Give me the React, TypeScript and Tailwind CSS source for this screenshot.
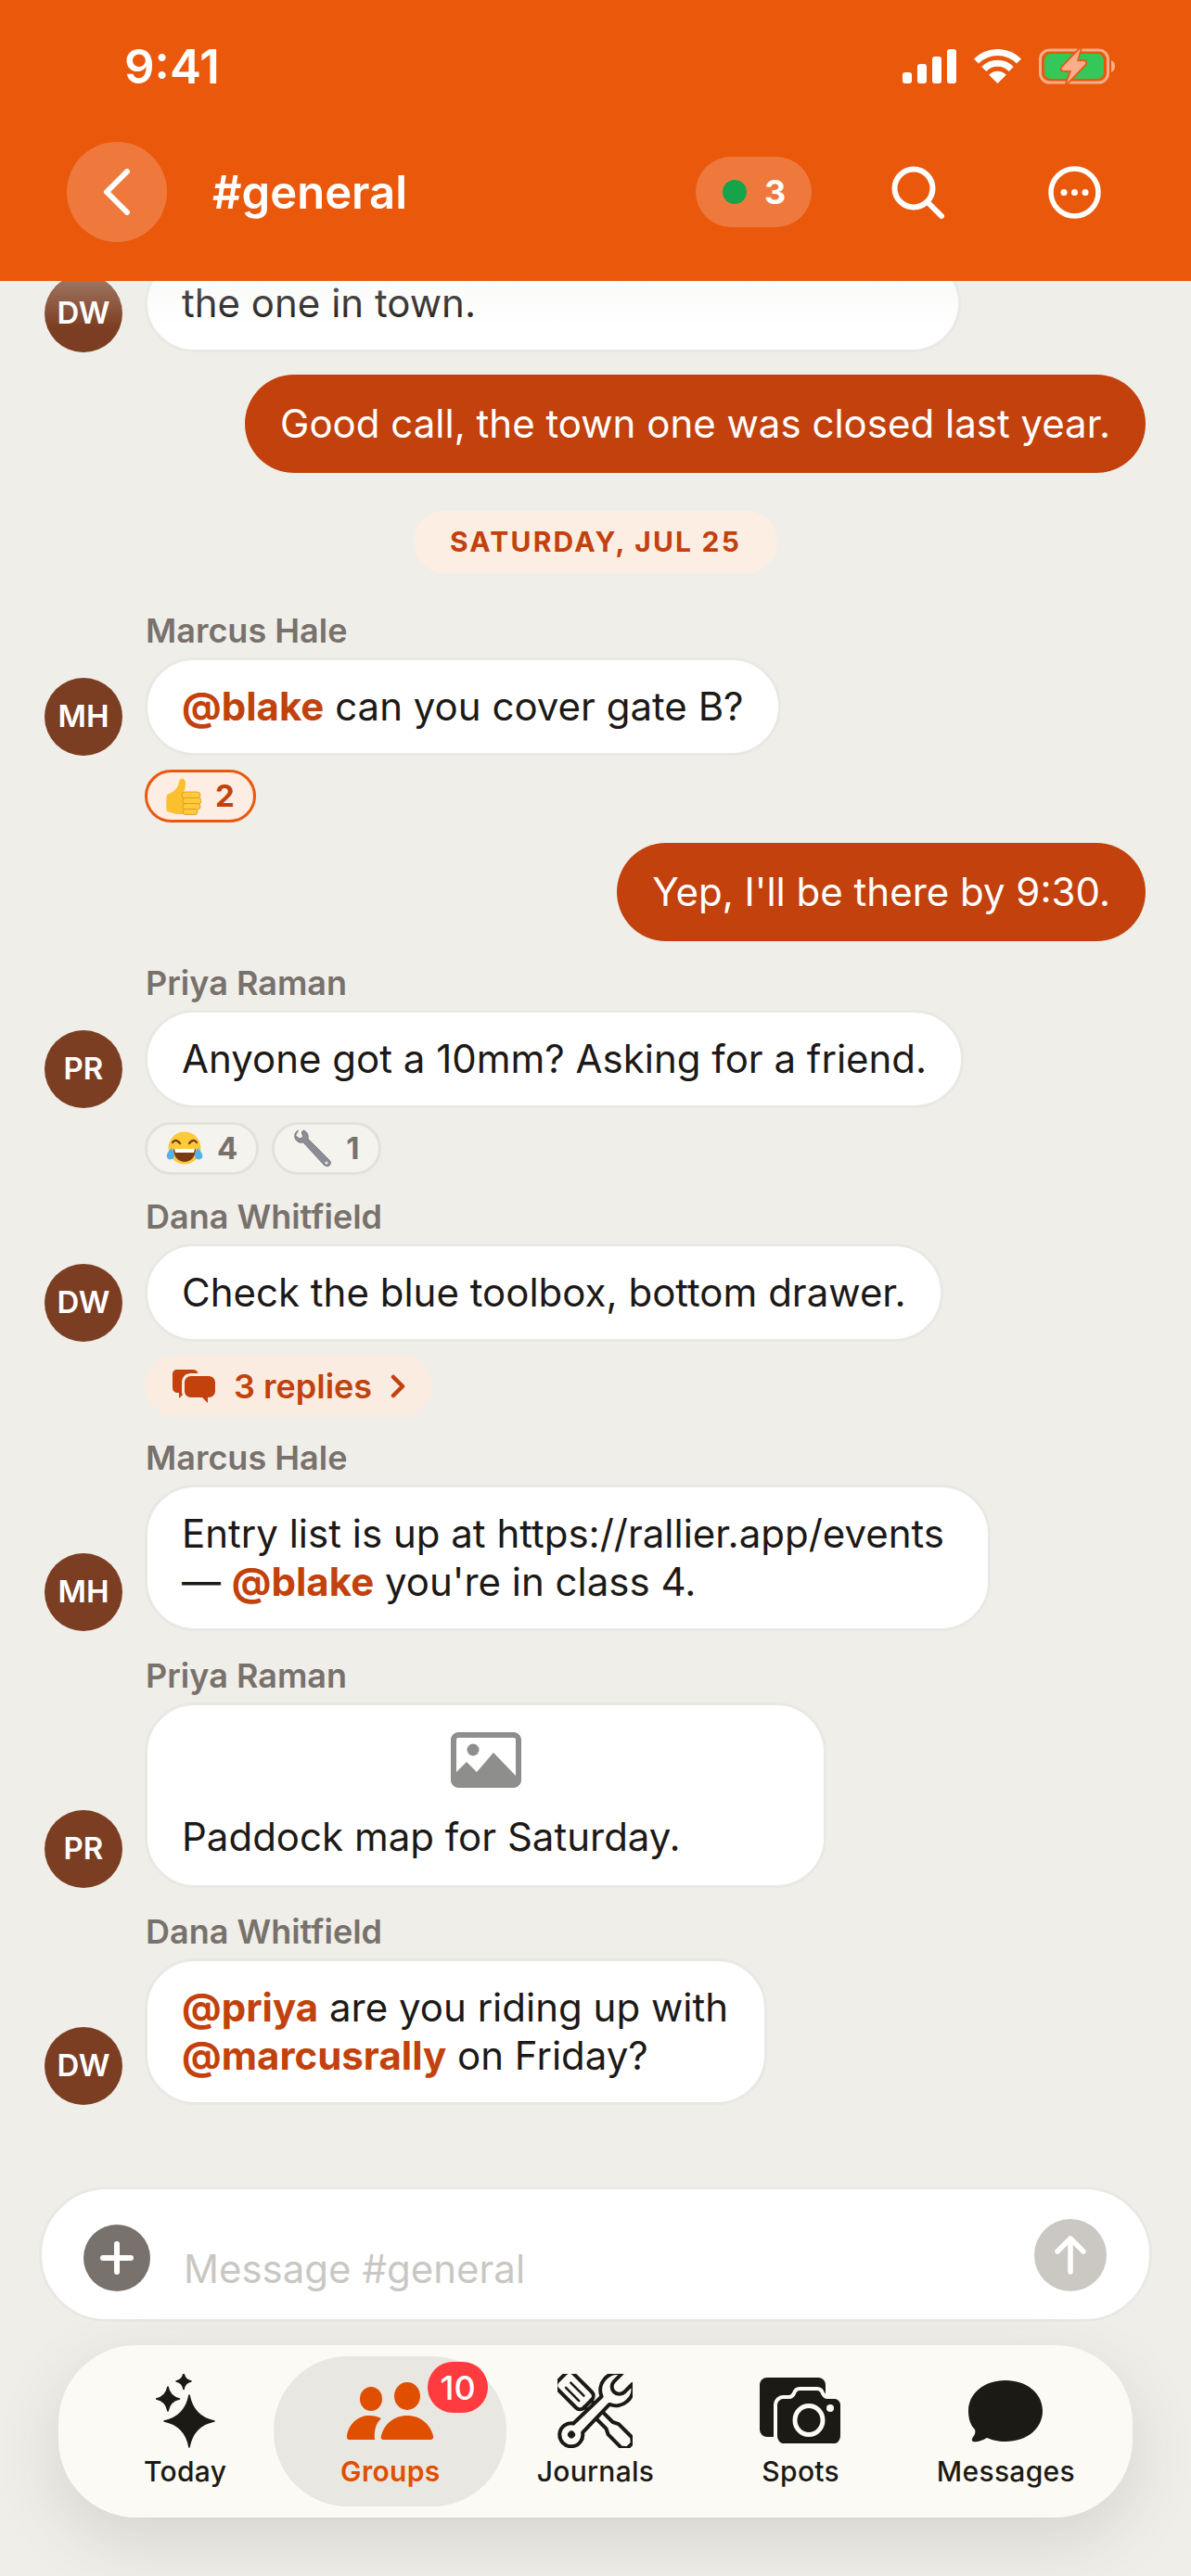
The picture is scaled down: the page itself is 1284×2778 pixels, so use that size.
import type { ReactNode } from 'react';

const Star = ({ cx, cy, rx, ry, w }: { cx: number; cy: number; rx: number; ry: number; w: number }) => (
  <path
    d={`M${cx} ${cy - ry}C${cx + w * 0.5} ${cy - w * 2} ${cx + w * 2} ${cy - w * 0.5} ${cx + rx} ${cy}C${cx + w * 2} ${cy + w * 0.5} ${cx + w * 0.5} ${cy + w * 2} ${cx} ${cy + ry}C${cx - w * 0.5} ${cy + w * 2} ${cx - w * 2} ${cy + w * 0.5} ${cx - rx} ${cy}C${cx - w * 2} ${cy - w * 0.5} ${cx - w * 0.5} ${cy - w * 2} ${cx} ${cy - ry}Z`}
    fill="#1C1A15"
    stroke="#1C1A15"
    strokeWidth="1.5"
    strokeLinejoin="round"
  />
);

const TodayIcon = () => (
  <svg width="64" height="80" viewBox="0 0 64 80">
    <Star cx={36} cy={51} rx={27} ry={28} w={6} />
    <Star cx={13} cy={27} rx={12.5} ry={13} w={2.8} />
    <Star cx={30} cy={8} rx={8} ry={8.5} w={1.8} />
  </svg>
);

const GroupsIcon = () => (
  <svg width="94" height="62" viewBox="0 0 94 62" fill="#E04F00">
    <ellipse cx="26" cy="18" rx="12" ry="13" />
    <ellipse cx="65" cy="15" rx="14" ry="15" />
    <path d="M3 62C0 62 0 60 0 58C2 44 13 36 24 36C29 36 33 37 37 39C32 44 29 50 30 62Z" />
    <path d="M40 62C37 62 36 60 37 58C40 45 51 36 65 36C79 36 90 45 93 58C94 60 92 62 90 62Z" />
  </svg>
);

const JournalsIcon = () => (
  <svg width="81" height="80" viewBox="0 0 80 80" fill="none" stroke="#1C1A15" strokeWidth="4" strokeLinejoin="round" strokeLinecap="round">
    <g transform="translate(40 40) rotate(-45)">
      <rect x="-12" y="-51" width="24" height="40" rx="6" />
      <path d="M-4.500 -40V-20M3 -40V-20" strokeWidth="2.500" />
      <path d="M-5 -11V22L-8 28V48L-4 53H4L8 48V28L5 22V-11" />
    </g>
    <g transform="translate(40 40) rotate(45)">
      <path
        d="M-8 -49A18.500 18.500 0 0 0 -6 -16L-7 26A12.500 12.500 0 1 0 7 26L6 -16A18.500 18.500 0 0 0 8 -49L8 -37A8 8 0 0 1 -8 -37Z"
        fill="#FCFAF5"
      />
      <circle cx="0" cy="36" r="4" fill="#1C1A15" stroke="none" />
    </g>
  </svg>
);

const SpotsIcon = () => (
  <svg width="89" height="73" viewBox="0 0 89 73">
    <rect x="0" y="0" width="71" height="64" rx="8" fill="#1C1A15" />
    <path
      d="M25 21H32C34 21 36 19 37 17C38 14 40 12 43 12H62C65 12 67 14 68 17C69 19 71 21 73 21H81C85 21 89 25 89 29V63C89 68 85 73 81 73H25C21 73 17 68 17 63V29C17 25 21 21 25 21Z"
      fill="#1C1A15"
      stroke="#FCFAF5"
      strokeWidth="4"
    />
    <ellipse cx="53" cy="46" rx="15" ry="15.500" fill="none" stroke="#FCFAF5" strokeWidth="5" />
    <circle cx="76" cy="33" r="4" fill="#FCFAF5" />
  </svg>
);

const MessagesIcon = () => (
  <svg width="80" height="67" viewBox="0 0 80 67">
    <path
      d="M40 0C63 0 80 14 80 33C80 52 63 66 40 66C31 66 25 64 20 62C15 65 9 67 5 66C3 65 4 63 5 61C7 59 8 56 7 53C2 48 0 41 0 33C0 14 17 0 40 0Z"
      fill="#1C1A15"
    />
  </svg>
);

const ThumbsUp = () => (
  <svg width="38" height="40" viewBox="0 0 38 40">
    <path
      d="M16 1C19 0 21 2 21 6C21 10 20 13 19 15H22V39H11C7 38 5 37 1 36C0 32 0 23 1 18C6 16 11 13 13 8C14 5 14 2 16 1Z"
      fill="#FBC02D"
    />
    <rect x="17" y="15" width="20" height="7" rx="3.500" fill="#FFCB3D" stroke="#D9921A" strokeWidth="0.8" />
    <rect x="18" y="21.500" width="20" height="6.500" rx="3.200" fill="#FFCB3D" stroke="#D9921A" strokeWidth="0.8" />
    <rect x="18" y="27.500" width="19" height="6.500" rx="3.200" fill="#FFCB3D" stroke="#D9921A" strokeWidth="0.8" />
    <rect x="18" y="33.500" width="16" height="6" rx="3" fill="#FFCB3D" stroke="#D9921A" strokeWidth="0.8" />
  </svg>
);

const Laugh = () => (
  <svg width="40" height="38" viewBox="0 0 40 38">
    <circle cx="20" cy="18" r="17.500" fill="#FFC93C" />
    <path d="M8 19H32C32 28 26 33 20 33C14 33 8 28 8 19Z" fill="#7A3B12" />
    <path d="M9 19H31L30 23H10Z" fill="#fff" />
    <path d="M7 12C9 9 12 9 15 13M25 13C28 9 31 9 33 12" fill="none" stroke="#6B3A12" strokeWidth="2.200" strokeLinecap="round" />
    <path d="M6 18C2 22 0 25 1 28C2 31 6 31 8 29C10 26 8 22 6 18Z" fill="#4FB3F0" />
    <path d="M34 18C38 22 40 25 39 28C38 31 34 31 32 29C30 26 32 22 34 18Z" fill="#4FB3F0" />
  </svg>
);

const WrenchEmoji = () => (
  <svg width="42" height="42" viewBox="0 0 42 42">
    <path
      d="M6 1C3 2 1 5 2 9C3 13 7 15 11 14L33 38C35 40 38 40 39 39C41 37 41 35 39 33L16 10C17 6 15 2 11 1L9 3L11 8L7 10L3 7"
      fill="#8C8D94"
      stroke="#6E6F76"
      strokeWidth="0.8"
    />
    <circle cx="36" cy="36" r="1.600" fill="#E8E6E1" />
  </svg>
);

const Avatar = ({ initials }: { initials: string }) => (
  <div className="flex h-[84px] w-[84px] shrink-0 items-center justify-center rounded-full bg-[#7C3E22] text-[33px] font-semibold text-white">
    {initials}
  </div>
);

const Mention = ({ children }: { children: ReactNode }) => (
  <span className="font-bold text-[#C2410C]">{children}</span>
);

const Bubble = ({ className, children }: { className?: string; children: ReactNode }) => (
  <div className={`rounded-[54px] border-[3px] border-[#E9E8E4] bg-white px-[37px] py-[24px] text-[42px] leading-[52px] text-[#1C1917] ${className ?? ''}`}>
    {children}
  </div>
);

const Outgoing = ({ children }: { children: ReactNode }) => (
  <div className="mr-[49px] self-end rounded-[54px] bg-[#C2410C] px-[38px] py-[27px] text-[42px] leading-[52px] text-white">
    {children}
  </div>
);

const Message = ({
  name,
  initials,
  children,
  below,
  className = 'mt-[23px]',
}: {
  name: string;
  initials: string;
  children: ReactNode;
  below?: ReactNode;
  className?: string;
}) => (
  <div className={`flex flex-col ${className}`}>
    <div className="mb-[7px] ml-[157px] text-[36px] leading-[44px] font-semibold text-[#78716C]">{name}</div>
    <div className="ml-[48px] flex items-end gap-[24px]">
      <Avatar initials={initials} />
      {children}
    </div>
    {below}
  </div>
);

const Reaction = ({ count, active, children }: { count: number; active?: boolean; children: ReactNode }) => (
  <div
    className={`flex h-[57px] items-center gap-[15px] rounded-full border-[3px] pr-[20px] pl-[20px] text-[33px] font-bold ${
      active ? 'border-[#EA580C] bg-[#FDEDE3] text-[#C2410C]' : 'border-[#E3E1DB] bg-[#F5F3EE] text-[#78716C]'
    }`}
  >
    {children}
    <span>{count}</span>
  </div>
);

const tabs = [
  { label: 'Today', icon: <TodayIcon /> },
  { label: 'Groups', icon: <GroupsIcon />, active: true },
  { label: 'Journals', icon: <JournalsIcon /> },
  { label: 'Spots', icon: <SpotsIcon /> },
  { label: 'Messages', icon: <MessagesIcon /> },
];

const App = () => (
  <div className="flex h-[2778px] w-[1284px] flex-col overflow-hidden bg-[#EFEEE9] font-['Inter',sans-serif]">
    <header className="z-10 flex h-[303px] shrink-0 flex-col bg-[#EA580C] pt-[44px] text-white">
      <div className="flex h-[54px] items-center justify-between pr-[82px] pl-[134px]">
        <span className="text-[51px] leading-none font-semibold">9:41</span>
        <div className="flex items-center gap-[19px]">
          <svg width="58" height="37" viewBox="0 0 58 37" fill="#fff">
            <rect x="0" y="25" width="10" height="12" rx="3" />
            <rect x="16" y="16" width="10" height="21" rx="3" />
            <rect x="32" y="8" width="10" height="29" rx="3" />
            <rect x="48" y="0" width="10" height="37" rx="3" />
          </svg>
          <svg width="51" height="37" viewBox="0 0 51 37" fill="none" stroke="#fff" strokeWidth="7">
            <path d="M2.500 13A32.500 32.500 0 0 1 48.500 13" />
            <path d="M10.800 21.500A20.500 20.500 0 0 1 40.200 21.500" />
            <path d="M25.500 37L16.200 27.700A13 13 0 0 1 34.800 27.700Z" fill="#fff" stroke="none" />
          </svg>
          <svg width="82" height="40" viewBox="0 0 82 40">
            <rect x="1.500" y="3" width="73" height="35" rx="10" fill="none" stroke="#F5AD8A" strokeWidth="3" />
            <rect x="6" y="7" width="64" height="27" rx="7" fill="#34C759" />
            <path d="M78 14C81 15 82 18 82 20C82 23 81 26 78 27Z" fill="#F5AD8A" />
            <path
              d="M45 1L25 22C24 24 25 25 27 25H35L30 39L50 18C51 16 50 15 48 15H41Z"
              fill="#F8AD8C"
              stroke="#EA580C"
              strokeWidth="3.500"
              strokeLinejoin="round"
              paintOrder="stroke"
            />
          </svg>
        </div>
      </div>
      <div className="mt-[55px] flex h-[108px] items-center pr-[97px] pl-[72px]">
        <button className="flex h-[108px] w-[108px] items-center justify-center rounded-full bg-[#EF793D]">
          <svg width="30" height="50" viewBox="0 0 30 50" fill="none" stroke="#fff" strokeWidth="6" strokeLinecap="round" strokeLinejoin="round">
            <path d="M26 3L4 25L26 47" />
          </svg>
        </button>
        <h1 className="ml-[49px] flex-1 text-[49px] leading-none font-semibold">#general</h1>
        <div className="flex h-[76px] w-[125px] items-center gap-[19px] rounded-[38px] bg-[#EF793D] pl-[29px] text-[36px] font-bold">
          <span className="h-[26px] w-[26px] rounded-full bg-[#16A34A]" />
          <span>3</span>
        </div>
        <svg className="ml-[86px]" width="57" height="57" viewBox="0 0 57 57" fill="none" stroke="#fff" strokeWidth="6" strokeLinecap="round">
          <circle cx="24" cy="24" r="20.500" />
          <path d="M39 39L54 54" />
        </svg>
        <svg className="ml-[112px]" width="57" height="57" viewBox="0 0 57 57" fill="none" stroke="#fff" strokeWidth="5.500">
          <circle cx="28.500" cy="28.500" r="25.500" />
          <circle cx="17" cy="28.500" r="3.500" fill="#fff" stroke="none" />
          <circle cx="28.500" cy="28.500" r="3.500" fill="#fff" stroke="none" />
          <circle cx="40" cy="28.500" r="3.500" fill="#fff" stroke="none" />
        </svg>
      </div>
    </header>

    <main className="relative flex min-h-0 flex-1 flex-col justify-end overflow-hidden pb-[88px]">
      <div className="absolute inset-x-0 top-0 z-10 h-[50px] bg-gradient-to-b from-[#EFEEE9]/30 to-transparent" />

      <div className="ml-[48px] flex items-end gap-[24px]">
        <Avatar initials="DW" />
        <Bubble className="w-[880px]">the one in town.</Bubble>
      </div>

      <div className="mt-[24px] flex flex-col">
        <Outgoing>Good call, the town one was closed last year.</Outgoing>
      </div>

      <div className="mt-[41px] flex justify-center">
        <div className="flex h-[67px] items-center rounded-full bg-[#FDEEE4] px-[39px] text-[30px] font-bold tracking-[2.2px] text-[#C2410C]">
          SATURDAY, JUL 25
        </div>
      </div>

      <Message
        className="mt-[40px]"
        name="Marcus Hale"
        initials="MH"
        below={
          <div className="mt-[15px] ml-[156px] flex">
            <Reaction count={2} active>
              <ThumbsUp />
            </Reaction>
          </div>
        }
      >
        <Bubble>
          <Mention>@blake</Mention> can you cover gate B?
        </Bubble>
      </Message>

      <div className="mt-[22px] flex flex-col">
        <Outgoing>Yep, I'll be there by 9:30.</Outgoing>
      </div>

      <Message
        name="Priya Raman"
        initials="PR"
        below={
          <div className="mt-[15px] ml-[156px] flex gap-[14px]">
            <Reaction count={4}>
              <Laugh />
            </Reaction>
            <Reaction count={1}>
              <WrenchEmoji />
            </Reaction>
          </div>
        }
      >
        <Bubble>Anyone got a 10mm? Asking for a friend.</Bubble>
      </Message>

      <Message
        name="Dana Whitfield"
        initials="DW"
        below={
          <div className="mt-[14px] ml-[156px] flex">
            <div className="flex h-[67px] items-center rounded-full bg-[#FBECE2] pr-[29px] pl-[30px] text-[36px] font-semibold text-[#C2410C]">
              <svg width="46" height="36" viewBox="0 0 46 36" fill="#C2410C">
                <path d="M5 0H22C25 0 27 2 27.500 4H20C14 4 10 8 10 14V24C10 25 10 26 11 27L7 31V25C2 25 0 23 0 19V5C0 2 2 0 5 0Z" />
                <path d="M20 7H39C43 7 46 10 46 14V23C46 27 43 30 39 30H38V36L32 30H20C16 30 13 27 13 23V14C13 10 16 7 20 7Z" />
              </svg>
              <span className="ml-[20px]">3 replies</span>
              <svg className="ml-[20px]" width="16" height="26" viewBox="0 0 16 26" fill="none" stroke="#C2410C" strokeWidth="4.500" strokeLinecap="round" strokeLinejoin="round">
                <path d="M3 3L13 13L3 23" />
              </svg>
            </div>
          </div>
        }
      >
        <Bubble>Check the blue toolbox, bottom drawer.</Bubble>
      </Message>

      <Message className="mt-[22px]" name="Marcus Hale" initials="MH">
        <Bubble className="w-[912px]">
          Entry list is up at https://rallier.app/events — <Mention>@blake</Mention> you're in class 4.
        </Bubble>
      </Message>

      <Message className="mt-[26px]" name="Priya Raman" initials="PR">
        <Bubble className="flex w-[735px] flex-col">
          <svg className="mt-[5px] self-center" width="76" height="60" viewBox="0 0 76 60">
            <path
              d="M8 0H68C72 0 76 4 76 8V52C76 56 72 60 68 60H8C4 60 0 56 0 52V8C0 4 4 0 8 0ZM8 6C7 6 6 7 6 8V43L17 32L28 43L46 22L70 47V8C70 7 69 6 68 6Z"
              fill="#8E8E8C"
              fillRule="evenodd"
            />
            <circle cx="24" cy="19" r="6.500" fill="#8E8E8C" />
          </svg>
          <div className="mt-[27px] pb-[2px]">Paddock map for Saturday.</div>
        </Bubble>
      </Message>

      <Message className="mt-[25px]" name="Dana Whitfield" initials="DW">
        <Bubble className="w-[671px]">
          <Mention>@priya</Mention> are you riding up with <Mention>@marcusrally</Mention> on Friday?
        </Bubble>
      </Message>
    </main>

    <div className="mx-[42px] flex h-[146px] shrink-0 items-end justify-between rounded-[73px] border-[3px] border-[#E9E8E4] bg-white pr-[46px] pb-[30px] pl-[45px]">
      <div className="flex min-w-0 flex-1 items-end">
        <div className="flex h-[72px] w-[72px] shrink-0 items-center justify-center rounded-full bg-[#78716C]">
          <svg width="36" height="36" viewBox="0 0 36 36" fill="none" stroke="#fff" strokeWidth="6" strokeLinecap="round">
            <path d="M18 3V33M3 18H33" />
          </svg>
        </div>
        <span className="mb-[-2px] ml-[36px] text-[42px] leading-[52px] text-[#C9C7C3]">Message #general</span>
      </div>
      <div className="flex h-[78px] w-[78px] shrink-0 items-center justify-center rounded-full bg-[#CBC8C3]">
        <svg width="36" height="42" viewBox="0 0 36 42" fill="none" stroke="#fff" strokeWidth="5.500" strokeLinecap="round" strokeLinejoin="round">
          <path d="M18 39V3M4 17L18 3L32 17" />
        </svg>
      </div>
    </div>

    <nav className="mx-[63px] mt-[25px] mb-[63px] grid h-[186px] shrink-0 grid-cols-5 rounded-[84px] bg-[#FCFAF5] px-[26px] pt-[27px] shadow-[0_24px_70px_rgba(60,55,40,0.14)]">
      {tabs.map(tab => (
        <div key={tab.label} className="relative flex flex-col items-center">
          {tab.active && (
            <>
              <div className="absolute -inset-x-[15px] -top-[15px] h-[162px] rounded-[80px] bg-[#E9E7E1]" />
              <div className="absolute top-[-9px] left-[151px] z-10 flex h-[55px] w-[65px] items-center justify-center rounded-full bg-[#FF3B40] text-[36px] font-medium text-white">
                10
              </div>
            </>
          )}
          <div className="relative flex h-[88px] items-center justify-center">{tab.icon}</div>
          <span
            className={`relative mt-[1px] text-[30px] leading-[40px] font-medium tracking-[0.3px] ${
              tab.active ? 'font-semibold text-[#E04F00]' : 'text-[#1C1A15]'
            }`}
          >
            {tab.label}
          </span>
        </div>
      ))}
    </nav>
  </div>
);

export default App;
